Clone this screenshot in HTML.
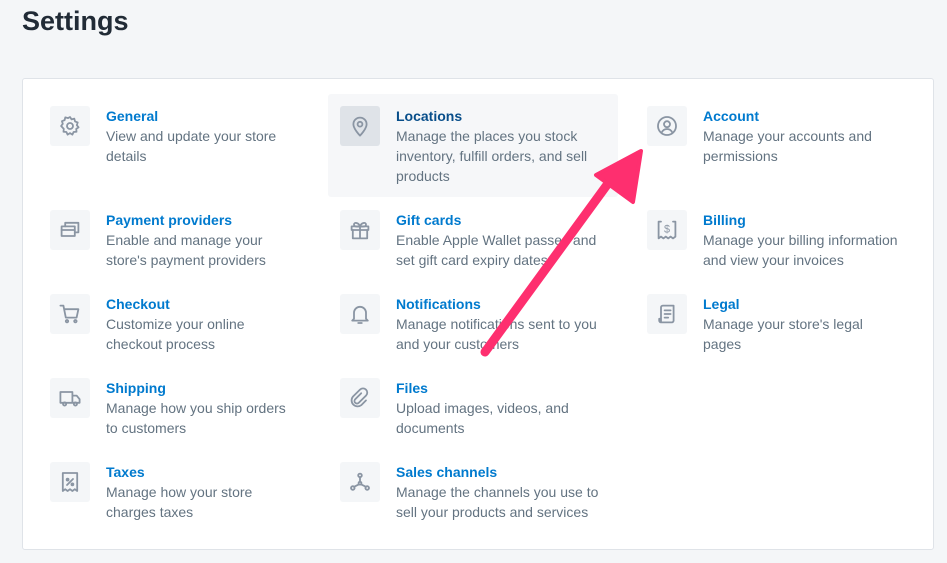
<!DOCTYPE html>
<html><head><style>
body{margin:0;width:947px;height:563px;background:#f4f6f8;font-family:"Liberation Sans",sans-serif;position:relative;overflow:hidden}
h1{position:absolute;left:22px;top:6px;margin:0;font-size:27px;font-weight:600;color:#212b36}
.card{position:absolute;left:22px;top:78px;width:912px;height:472px;background:#fff;border:1px solid #dfe3e8;border-radius:3px;box-sizing:border-box}
.hl{position:absolute;left:328px;top:94px;width:290px;height:103px;background:#f6f7f9;border-radius:3px}
.it{position:absolute;width:260px}
.ic{position:absolute;left:0;top:0;width:40px;height:40px;background:#f4f6f8;border-radius:3px;display:flex;align-items:center;justify-content:center}
.tx{position:absolute;left:56px;top:0;font-size:14px;line-height:20px;color:#637381;width:190px}
.tx b{display:block;color:#007ace;font-weight:600}
svg.i{width:24px;height:24px;fill:none;stroke:#8a95a3;stroke-width:1.5;stroke-linecap:round;stroke-linejoin:round}
</style></head><body>
<h1>Settings</h1>
<div class="card"></div>
<div class="hl"></div>

<div class="it" style="left:50px;top:106px"><div class="ic"><svg class="i" viewBox="0 0 20 20"><circle cx="10" cy="10" r="2.5"/><path d="M10 2.5l1.3 2 2.3-.6.6 2.3 2.2.9-.7 2.2 1.4 1.8-1.9 1.3.2 2.4-2.4.2-1 2.2-2-1.3-2 1.3-1-2.2-2.4-.2.2-2.4L2.6 10l1.4-1.8-.7-2.2 2.2-.9.6-2.3 2.3.6z"/></svg></div><div class="tx" style="width:182px"><b>General</b>View and update your store details</div></div>
<div class="it" style="left:340px;top:106px"><div class="ic" style="background:#dfe3e8"><svg class="i" viewBox="0 0 20 20"><path d="M10 18s-5.5-5.5-5.5-9.5a5.5 5.5 0 0111 0C15.5 12.5 10 18 10 18z"/><circle cx="10" cy="8.5" r="2"/></svg></div><div class="tx" style="width:210px"><b style="color:#084e8a">Locations</b>Manage the places you stock inventory, fulfill orders, and sell products</div></div>
<div class="it" style="left:647px;top:106px"><div class="ic"><svg class="i" viewBox="0 0 20 20"><circle cx="10" cy="10" r="7.5"/><circle cx="10" cy="8.5" r="2.5"/><path d="M5.5 15.5c1-2 2.5-3 4.5-3s3.5 1 4.5 3"/></svg></div><div class="tx" style="width:180px"><b>Account</b>Manage your accounts and permissions</div></div>

<div class="it" style="left:50px;top:210px"><div class="ic"><svg class="i" viewBox="0 0 20 20"><rect x="3" y="7" width="11" height="8"/><path d="M6 7V4h11v8h-3M3 10h11"/></svg></div><div class="tx" style="width:175px"><b>Payment providers</b>Enable and manage your store's payment providers</div></div>
<div class="it" style="left:340px;top:210px"><div class="ic"><svg class="i" viewBox="0 0 20 20"><rect x="3" y="7" width="14" height="3"/><path d="M4 10v7h12v-7M10 7v10M10 7c-1-3-5-4-5-1.5S10 7 10 7zm0 0c1-3 5-4 5-1.5S10 7 10 7z"/></svg></div><div class="tx" style="width:210px"><b>Gift cards</b>Enable Apple Wallet passes and set gift card expiry dates</div></div>
<div class="it" style="left:647px;top:210px"><div class="ic"><svg class="i" viewBox="0 0 20 20"><path d="M5 3H3v14l2-1.5 2 1.5 2-1.5 2 1.5 2-1.5 2 1.5 2-1.5V3h-2"/><text x="10" y="12" font-size="9" text-anchor="middle" fill="#8a95a3" stroke="none" font-family="Liberation Sans">$</text></svg></div><div class="tx" style="width:215px"><b>Billing</b>Manage your billing information and view your invoices</div></div>

<div class="it" style="left:50px;top:294px"><div class="ic"><svg class="i" viewBox="0 0 20 20"><path d="M2 3h2.5l2 10h9l1.5-7H5.5"/><circle cx="7.5" cy="16" r="1"/><circle cx="14.5" cy="16" r="1"/></svg></div><div class="tx" style="width:165px"><b>Checkout</b>Customize your online checkout process</div></div>
<div class="it" style="left:340px;top:294px"><div class="ic"><svg class="i" viewBox="0 0 20 20"><path d="M5 14V9a5 5 0 0110 0v5l1.5 1.5h-13zM8.5 17.5h3"/></svg></div><div class="tx" style="width:210px"><b>Notifications</b>Manage notifications sent to you and your customers</div></div>
<div class="it" style="left:647px;top:294px"><div class="ic"><svg class="i" viewBox="0 0 20 20"><path d="M5 17V4.5A1.5 1.5 0 016.5 3h9v12.5a1.5 1.5 0 01-1.5 1.5H5zm0 0a1.5 1.5 0 01-1.5-1.5V14H5M8 7h5M8 10h5M8 13h3"/></svg></div><div class="tx" style="width:180px"><b>Legal</b>Manage your store's legal pages</div></div>

<div class="it" style="left:50px;top:378px"><div class="ic"><svg class="i" viewBox="0 0 20 20"><path d="M2 5h10v9H2zM12 8h3.5l2.5 3v3h-6"/><circle cx="5.5" cy="15" r="1.3"/><circle cx="14.5" cy="15" r="1.3"/></svg></div><div class="tx" style="width:190px"><b>Shipping</b>Manage how you ship orders to customers</div></div>
<div class="it" style="left:340px;top:378px"><div class="ic"><svg class="i" viewBox="0 0 20 20"><path d="M11 6l-5 5a2 2 0 003 3l6-6a3.5 3.5 0 00-5-5l-6 6a5 5 0 007 7l4-4"/></svg></div><div class="tx" style="width:185px"><b>Files</b>Upload images, videos, and documents</div></div>

<div class="it" style="left:50px;top:462px"><div class="ic"><svg class="i" viewBox="0 0 20 20"><path d="M4 2.5h12v15l-2-1.5-2 1.5-2-1.5-2 1.5-2-1.5-2 1.5zM7.5 12.5l5-5"/><circle cx="8" cy="8" r=".8"/><circle cx="12" cy="12" r=".8"/></svg></div><div class="tx" style="width:165px"><b>Taxes</b>Manage how your store charges taxes</div></div>
<div class="it" style="left:340px;top:462px"><div class="ic"><svg class="i" viewBox="0 0 20 20"><circle cx="10" cy="4.5" r="1.5"/><circle cx="4" cy="15" r="1.5"/><circle cx="16" cy="15" r="1.5"/><circle cx="10" cy="11" r="1.2"/><path d="M10 6v4M9 12l-4 2M11 12l4 2"/></svg></div><div class="tx" style="width:210px"><b>Sales channels</b>Manage the channels you use to sell your products and services</div></div>

<svg style="position:absolute;left:0;top:0" width="947" height="563"><path d="M485 352L612 178" stroke="#fe2f6f" stroke-width="9" stroke-linecap="round"/><polygon points="641,151 596,175 633,202" fill="#fe2f6f" stroke="#fe2f6f" stroke-width="4" stroke-linejoin="round"/></svg>
</body></html>
